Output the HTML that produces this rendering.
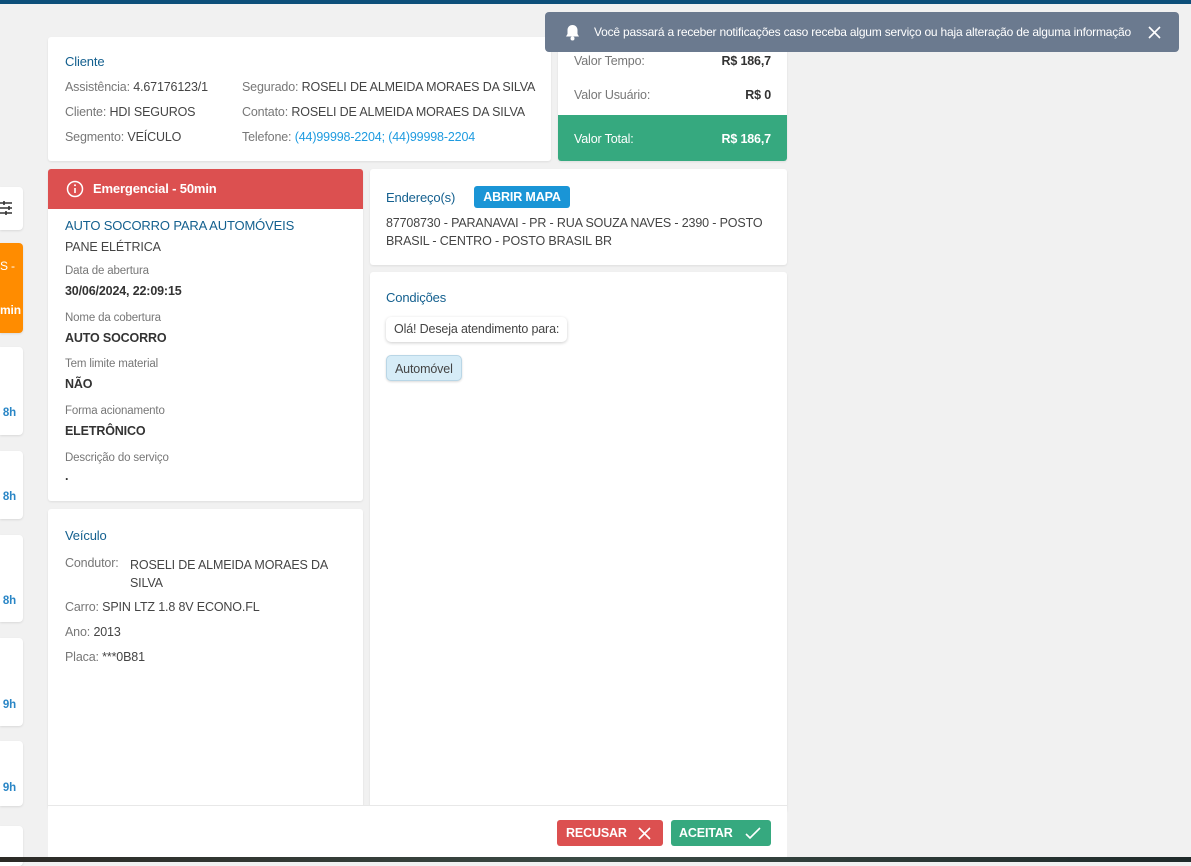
<!DOCTYPE html>
<html><head><meta charset="utf-8"><style>
*{box-sizing:border-box;margin:0;padding:0}
body{width:1191px;height:862px;background:#f1f1f1;font-family:"Liberation Sans",sans-serif;font-size:12.5px;letter-spacing:-0.15px;color:#444;position:relative;overflow:hidden}
.a{position:absolute}
.card{position:absolute;background:#fff;border-radius:3px;box-shadow:0 1px 2px rgba(0,0,0,.08)}
.t{color:#14608f;font-size:13px}
.g{color:#777}
.lbl{color:#777;font-size:11.5px}
.val{color:#333;font-weight:bold;font-size:12.5px}
.side{position:absolute;left:0;width:23px;background:#fff;border-radius:0 4px 4px 0;box-shadow:0 1px 2px rgba(0,0,0,.1)}
.h{position:absolute;right:7px;color:#2a86c6;font-weight:bold;font-size:11.5px}
</style></head><body>
<div class="a" style="left:0;top:0;width:1191px;height:4px;background:#0d4f7a"></div>

<div class="side" style="top:187px;height:43px"><svg class="a" style="left:0;top:13px" width="14" height="16" viewBox="0 0 14 16"><path d="M0 3h12M0 8h12M0 13h12M4 1v4M9 6v4M6 11v4" stroke="#333" stroke-width="1.6" fill="none"/></svg></div>
<div class="side" style="top:243px;height:90px;background:#ff8c00;color:#fff;font-size:12px"><span class="a" style="left:0;top:16px">S -</span><span class="a" style="left:0;top:60px;font-weight:bold">min</span></div>
<div class="side" style="top:347px;height:88px"><span class="h" style="top:60px">8h</span></div>
<div class="side" style="top:451px;height:68px"><span class="h" style="top:40px">8h</span></div>
<div class="side" style="top:535px;height:87px"><span class="h" style="top:60px">8h</span></div>
<div class="side" style="top:638px;height:88px"><span class="h" style="top:61px">9h</span></div>
<div class="side" style="top:741px;height:65px"><span class="h" style="top:41px">9h</span></div>
<div class="side" style="top:826px;height:40px"></div>

<div class="card" style="left:48px;top:37px;width:503px;height:124px">
<div class="a t" style="left:17px;top:17px">Cliente</div>
<div class="a" style="left:17px;top:43px"><span class="g">Assistência:</span> 4.67176123/1</div>
<div class="a" style="left:17px;top:68px"><span class="g">Cliente:</span> HDI SEGUROS</div>
<div class="a" style="left:17px;top:93px"><span class="g">Segmento:</span> VEÍCULO</div>
<div class="a" style="left:194px;top:43px;white-space:nowrap"><span class="g">Segurado:</span> ROSELI DE ALMEIDA MORAES DA SILVA</div>
<div class="a" style="left:194px;top:68px;white-space:nowrap"><span class="g">Contato:</span> ROSELI DE ALMEIDA MORAES DA SILVA</div>
<div class="a" style="left:194px;top:93px;white-space:nowrap"><span class="g">Telefone:</span> <span style="color:#1e9be0">(44)99998-2204; (44)99998-2204</span></div>
</div>

<div class="card" style="left:558px;top:37px;width:229px;height:124px;overflow:hidden">
<div class="a g" style="left:16px;top:17px">Valor Tempo:</div><div class="a val" style="right:16px;top:17px">R$ 186,7</div>
<div class="a g" style="left:16px;top:51px">Valor Usuário:</div><div class="a val" style="right:16px;top:51px">R$ 0</div>
<div class="a" style="left:0;top:78px;width:229px;height:46px;background:#36a97f;color:#fff"><span class="a" style="left:16px;top:17px">Valor Total:</span><span class="a" style="right:16px;top:17px;font-weight:bold">R$ 186,7</span></div>
</div>

<div class="a" style="left:545px;top:12px;width:634px;height:40px;background:#6b7a8f;border-radius:4px;color:#fff;font-size:12px;letter-spacing:-0.2px">
<svg class="a" style="left:20px;top:12px" width="15" height="17" viewBox="0 0 15 17"><path d="M7.5 1c-3 0-5 2.3-5 5v4L1 12.5h13L12.5 10V6c0-2.7-2-5-5-5z" fill="#fff"/><circle cx="7.5" cy="14.5" r="2" fill="#fff"/></svg>
<span class="a" style="left:49px;top:13px;white-space:nowrap">Você passará a receber notificações caso receba algum serviço ou haja alteração de alguma informação</span>
<svg class="a" style="left:603px;top:14px" width="13" height="13"><path d="M1 1l11 11M12 1L1 12" stroke="#fff" stroke-width="1.6"/></svg>
</div>

<div class="card" style="left:48px;top:169px;width:315px;height:332px;overflow:hidden">
<div class="a" style="left:0;top:0;width:315px;height:40px;background:#dc5050;color:#fff;font-weight:bold;font-size:13px">
<svg class="a" style="left:18px;top:11px" width="18" height="18"><circle cx="9" cy="9" r="7.5" stroke="#fff" stroke-width="1.5" fill="none"/><path d="M9 8v5" stroke="#fff" stroke-width="1.6"/><circle cx="9" cy="5.3" r="1" fill="#fff"/></svg>
<span class="a" style="left:45px;top:12px">Emergencial - 50min</span></div>
<div class="a t" style="left:17px;top:49px">AUTO SOCORRO PARA AUTOMÓVEIS</div>
<div class="a" style="left:17px;top:71px">PANE ELÉTRICA</div>
<div class="a lbl" style="left:17px;top:96px">Data de abertura</div><div class="a val" style="left:17px;top:115px">30/06/2024, 22:09:15</div>
<div class="a lbl" style="left:17px;top:143px">Nome da cobertura</div><div class="a val" style="left:17px;top:162px">AUTO SOCORRO</div>
<div class="a lbl" style="left:17px;top:189px">Tem limite material</div><div class="a val" style="left:17px;top:208px">NÃO</div>
<div class="a lbl" style="left:17px;top:236px">Forma acionamento</div><div class="a val" style="left:17px;top:255px">ELETRÔNICO</div>
<div class="a lbl" style="left:17px;top:283px">Descrição do serviço</div><div class="a val" style="left:17px;top:300px">.</div>
</div>

<div class="card" style="left:48px;top:509px;width:315px;height:300px">
<div class="a t" style="left:17px;top:19px">Veículo</div>
<div class="a" style="left:17px;top:47px"><span class="g">Condutor:</span></div>
<div class="a" style="left:82px;top:47px;width:220px;line-height:18px">ROSELI DE ALMEIDA MORAES DA SILVA</div>
<div class="a" style="left:17px;top:91px"><span class="g">Carro:</span> SPIN LTZ 1.8 8V ECONO.FL</div>
<div class="a" style="left:17px;top:116px"><span class="g">Ano:</span> 2013</div>
<div class="a" style="left:17px;top:141px"><span class="g">Placa:</span> ***0B81</div>
</div>

<div class="card" style="left:370px;top:169px;width:417px;height:96px">
<div class="a t" style="left:16px;top:21px">Endereço(s)</div>
<div class="a" style="left:104px;top:17px;width:96px;height:22px;background:#1a95d6;color:#fff;font-weight:bold;font-size:12.5px;border-radius:3px;text-align:center;line-height:22px">ABRIR MAPA</div>
<div class="a" style="left:16px;top:45px;width:390px;line-height:18px">87708730 - PARANAVAI - PR - RUA SOUZA NAVES - 2390 - POSTO BRASIL - CENTRO - POSTO BRASIL BR</div>
</div>

<div class="card" style="left:370px;top:272px;width:417px;height:540px">
<div class="a t" style="left:16px;top:18px">Condições</div>
<div class="a" style="left:16px;top:45px;height:25px;padding:0 8px;line-height:25px;border-radius:5px;box-shadow:0 1px 3px rgba(0,0,0,.2);white-space:nowrap">Olá! Deseja atendimento para:</div>
<div class="a" style="left:16px;top:83px;height:26px;padding:0 8px;line-height:26px;border-radius:5px;background:#d6ecf7;border:1px solid #b9d6e6;box-shadow:0 1px 2px rgba(0,0,0,.15)">Automóvel</div>
</div>

<div class="a" style="left:48px;top:805px;width:739px;height:52px;background:#fff;border-top:1px solid #e8e8e8">
<div class="a" style="left:509px;top:14px;width:106px;height:26px;background:#dc5050;border-radius:3px;color:#fff;font-weight:bold;font-size:12.5px"><span class="a" style="left:9px;top:6px">RECUSAR</span><svg class="a" style="left:81px;top:7px" width="13" height="13"><path d="M1 1l11 11M12 1L1 12" stroke="#fff" stroke-width="1.6"/></svg></div>
<div class="a" style="left:623px;top:14px;width:100px;height:26px;background:#36a97f;border-radius:3px;color:#fff;font-weight:bold;font-size:12.5px"><span class="a" style="left:8px;top:6px">ACEITAR</span><svg class="a" style="left:74px;top:7px" width="16" height="13"><path d="M1 7l4 4L15 1" stroke="#fff" stroke-width="1.6" fill="none"/></svg></div>
</div>
<div class="a" style="left:0;top:857px;width:1191px;height:5px;background:linear-gradient(90deg,#2c2a26,#3a4a44,#1f2a2a)"></div>
</body></html>
